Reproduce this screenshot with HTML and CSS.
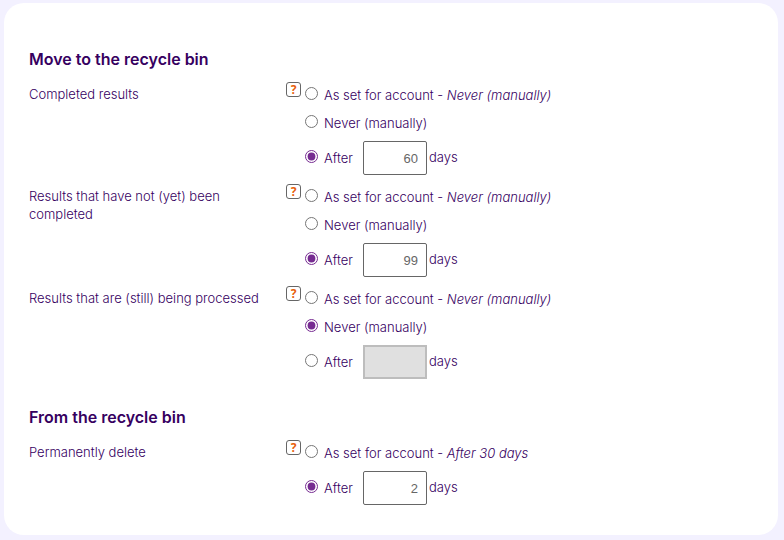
FILE: index.html
```html
<!DOCTYPE html>
<html lang="en">
<head>
  <meta charset="UTF-8">
  <meta name="viewport" content="width=device-width, initial-scale=1.0">
  <title>Recycle bin settings</title>
  <link rel="stylesheet" href="styles.css">
</head>
<body>
  <form class="card">
    <h2 class="section-title">Move to the recycle bin</h2>

    <div class="setting" role="radiogroup" aria-labelledby="completed-title">
      <div class="setting-title" id="completed-title">Completed results</div>
      <button type="button" class="help">?</button>
      <div class="options">
        <div class="option">
          <input type="radio" name="completed" id="completed-account">
          <label for="completed-account">As set for account - <em>Never (manually)</em></label>
        </div>
        <div class="option">
          <input type="radio" name="completed" id="completed-never">
          <label for="completed-never">Never (manually)</label>
        </div>
        <div class="option option-days">
          <input type="radio" name="completed" id="completed-after" checked>
          <label for="completed-after">After</label>
          <input type="text" class="days" id="completed-days" value="60">
          <label class="unit" for="completed-days">days</label>
        </div>
      </div>
    </div>

    <div class="setting" role="radiogroup" aria-labelledby="open-title">
      <div class="setting-title" id="open-title">Results that have not (yet) been completed</div>
      <button type="button" class="help">?</button>
      <div class="options">
        <div class="option">
          <input type="radio" name="open" id="open-account">
          <label for="open-account">As set for account - <em>Never (manually)</em></label>
        </div>
        <div class="option">
          <input type="radio" name="open" id="open-never">
          <label for="open-never">Never (manually)</label>
        </div>
        <div class="option option-days">
          <input type="radio" name="open" id="open-after" checked>
          <label for="open-after">After</label>
          <input type="text" class="days" id="open-days" value="99">
          <label class="unit" for="open-days">days</label>
        </div>
      </div>
    </div>

    <div class="setting" role="radiogroup" aria-labelledby="processed-title">
      <div class="setting-title" id="processed-title">Results that are (still) being processed</div>
      <button type="button" class="help">?</button>
      <div class="options">
        <div class="option">
          <input type="radio" name="processed" id="processed-account">
          <label for="processed-account">As set for account - <em>Never (manually)</em></label>
        </div>
        <div class="option">
          <input type="radio" name="processed" id="processed-never" checked>
          <label for="processed-never">Never (manually)</label>
        </div>
        <div class="option option-days">
          <input type="radio" name="processed" id="processed-after">
          <label for="processed-after">After</label>
          <input type="text" class="days" id="processed-days" disabled>
          <label class="unit" for="processed-days">days</label>
        </div>
      </div>
    </div>

    <h2 class="section-title">From the recycle bin</h2>

    <div class="setting" role="radiogroup" aria-labelledby="delete-title">
      <div class="setting-title" id="delete-title">Permanently delete</div>
      <button type="button" class="help">?</button>
      <div class="options">
        <div class="option">
          <input type="radio" name="delete" id="delete-account">
          <label for="delete-account">As set for account - <em>After 30 days</em></label>
        </div>
        <div class="option option-days">
          <input type="radio" name="delete" id="delete-after" checked>
          <label for="delete-after">After</label>
          <input type="text" class="days" id="delete-days" value="2">
          <label class="unit" for="delete-days">days</label>
        </div>
      </div>
    </div>
  </form>
</body>
</html>
```
FILE: styles.css
```css
* {
  box-sizing: border-box;
}
body {
  margin: 0;
  padding: 3px 6px 5px 4px;
  background-color: #f3f1ff;
  color: #36005f;
  font-family: Inter, sans-serif;
  font-size: 13px;
  font-weight: 300;
  line-height: 18px;
}
.card {
  padding: 46px 25px 24px;
  background-color: #fff;
  border-radius: 20px;
}
.section-title {
  margin: 0 0 10px;
  font-size: 16px;
  font-weight: 600;
  line-height: 20px;
}
.setting + .section-title {
  margin-top: 22px;
}

/* One setting: title, help button, list of choices */
.setting {
  display: grid;
  grid-template-columns: 253px 15px 1fr;
  column-gap: 4px;
  align-items: start;
}
.setting-title {
  padding: 6px 16px 0 0;
}
.help {
  width: 15px;
  height: 15px;
  margin-top: 3px;
  padding: 0;
  border: 1px solid #666;
  border-radius: 3px;
  background: #fff;
  color: #e8600a;
  font-family: "Noto Sans", sans-serif;
  font-size: 12px;
  font-weight: bold;
  line-height: 13px;
  cursor: pointer;
}
.option {
  display: flex;
  align-items: center;
  height: 28px;
}
.option label {
  padding-top: 3px;
}
.option input[type="radio"] {
  width: 13px;
  height: 13px;
  margin: 0 6px 0 0;
  accent-color: #762b91;
}
.option-days {
  height: 46px;
}
.option-days input[type="radio"] {
  margin-bottom: 3px;
}
.option-days label {
  padding-top: 0;
}
.option .unit {
  padding: 0 0 2px 2px;
}

/* Number of days */
.days {
  width: 64px;
  height: 34px;
  margin-left: 10px;
  padding: 0 8px;
  border: 1px solid #666;
  border-radius: 2px;
  background: #fff;
  color: #666;
  font-family: "Liberation Sans", Arial, sans-serif;
  font-size: 13px;
  text-align: right;
}
.days:disabled {
  border: 2px solid #bdbdbd;
  border-radius: 0;
  background: #e0e0e0;
}
```
